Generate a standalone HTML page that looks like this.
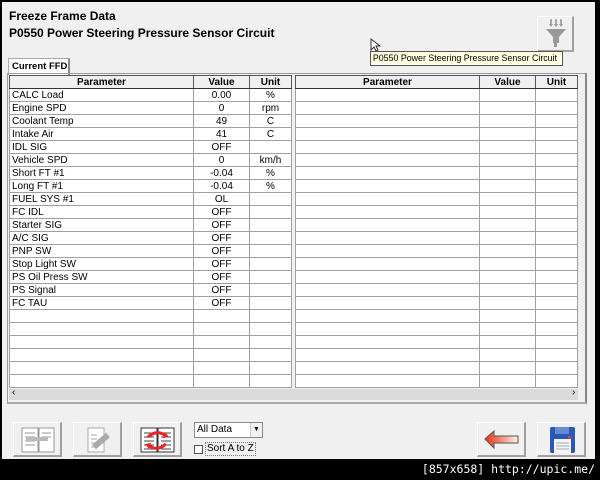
<!DOCTYPE html>
<html><head><style>
*{margin:0;padding:0;box-sizing:border-box}
body{width:600px;height:480px;background:#000;position:relative;overflow:hidden;font-family:"Liberation Sans",Arial,sans-serif;font-size:11px;color:#000}
.win{position:absolute;left:2px;top:2px;width:593px;height:457px;background:#f0f0f0}
.a{position:absolute;white-space:nowrap}
.t1{left:9px;top:9px;font-weight:bold;font-size:12px}
.t2{left:9px;top:26px;font-weight:bold;font-size:12px}
table{position:absolute;border-collapse:collapse;table-layout:fixed;background:#fff;border:1px solid #333}
td,th{height:13px;border:1px solid #a0a0a0;padding:0 2px;font-size:10px;line-height:11px;white-space:nowrap;overflow:hidden}
th{background:#f0f0f0;font-weight:bold;border:1px solid #555;border-bottom:1px solid #333}
td.c{text-align:center}
.btn{position:absolute;width:49px;height:35px;background:#f0f0f0;border:1px solid #fff;border-right:2px solid #a0a0a0;border-bottom:2px solid #a0a0a0}
</style></head><body>
<div class="win"></div>
<div class="a t1">Freeze Frame Data</div>
<div class="a t2">P0550 Power Steering Pressure Sensor Circuit</div>

<div class="btn" style="left:537px;top:16px;width:37px;height:36px">
<svg width="34" height="32" viewBox="0 0 34 32"><g fill="#999"><path d="M8 12h20l-7 8v6h-6v-6z"/><rect x="16" y="26" width="3" height="4"/><path d="M13 2v6M18 2v6M23 2v6" stroke="#aaa" stroke-width="2"/><path d="M11 7l2 3 2-3zM16 7l2 3 2-3zM21 7l2 3 2-3z"/></g></svg>
</div>
<svg class="a" style="left:370px;top:38px" width="12" height="14"><path d="M1 1v11l3-3 2 4 2-1-2-4h4z" fill="#fff" stroke="#333" stroke-width="1"/></svg>
<div class="a" style="left:370px;top:51px;width:193px;height:15px;background:#ffffe1;border:1px solid #555;overflow:hidden"><span style="display:inline-block;font-size:9.5px;line-height:13px;padding-left:2px;transform:scaleX(0.93);transform-origin:0 0">P0550 Power Steering Pressure Sensor Circuit</span></div>

<div class="a" style="left:8px;top:58px;width:62px;height:17px;background:#fff;border:1px solid #aaa;border-bottom:none;border-right:2px solid #888;font-weight:bold;font-size:9.5px;padding:2px 0 0 3px">Current FFD</div>
<div class="a" style="left:7px;top:73px;width:580px;height:331px;border:1px solid #999;border-right:2px solid #888;border-bottom:2px solid #aaa"></div>

<table style="left:9px;top:75px;width:282px">
<colgroup><col style="width:184px"><col style="width:56px"><col style="width:42px"></colgroup>
<tr><th>Parameter</th><th>Value</th><th>Unit</th></tr>
<tr><td>CALC Load</td><td class="c">0.00</td><td class="c">%</td></tr>
<tr><td>Engine SPD</td><td class="c">0</td><td class="c">rpm</td></tr>
<tr><td>Coolant Temp</td><td class="c">49</td><td class="c">C</td></tr>
<tr><td>Intake Air</td><td class="c">41</td><td class="c">C</td></tr>
<tr><td>IDL SIG</td><td class="c">OFF</td><td></td></tr>
<tr><td>Vehicle SPD</td><td class="c">0</td><td class="c">km/h</td></tr>
<tr><td>Short FT #1</td><td class="c">-0.04</td><td class="c">%</td></tr>
<tr><td>Long FT #1</td><td class="c">-0.04</td><td class="c">%</td></tr>
<tr><td>FUEL SYS #1</td><td class="c">OL</td><td></td></tr>
<tr><td>FC IDL</td><td class="c">OFF</td><td></td></tr>
<tr><td>Starter SIG</td><td class="c">OFF</td><td></td></tr>
<tr><td>A/C SIG</td><td class="c">OFF</td><td></td></tr>
<tr><td>PNP SW</td><td class="c">OFF</td><td></td></tr>
<tr><td>Stop Light SW</td><td class="c">OFF</td><td></td></tr>
<tr><td>PS Oil Press SW</td><td class="c">OFF</td><td></td></tr>
<tr><td>PS Signal</td><td class="c">OFF</td><td></td></tr>
<tr><td>FC TAU</td><td class="c">OFF</td><td></td></tr>
<tr><td></td><td></td><td></td></tr><tr><td></td><td></td><td></td></tr><tr><td></td><td></td><td></td></tr><tr><td></td><td></td><td></td></tr><tr><td></td><td></td><td></td></tr><tr><td></td><td></td><td></td></tr>
</table>

<table style="left:295px;top:75px;width:282px">
<colgroup><col style="width:184px"><col style="width:56px"><col style="width:42px"></colgroup>
<tr><th>Parameter</th><th>Value</th><th>Unit</th></tr>
<tr><td></td><td></td><td></td></tr><tr><td></td><td></td><td></td></tr><tr><td></td><td></td><td></td></tr><tr><td></td><td></td><td></td></tr><tr><td></td><td></td><td></td></tr><tr><td></td><td></td><td></td></tr><tr><td></td><td></td><td></td></tr><tr><td></td><td></td><td></td></tr><tr><td></td><td></td><td></td></tr><tr><td></td><td></td><td></td></tr><tr><td></td><td></td><td></td></tr><tr><td></td><td></td><td></td></tr><tr><td></td><td></td><td></td></tr><tr><td></td><td></td><td></td></tr><tr><td></td><td></td><td></td></tr><tr><td></td><td></td><td></td></tr><tr><td></td><td></td><td></td></tr><tr><td></td><td></td><td></td></tr><tr><td></td><td></td><td></td></tr><tr><td></td><td></td><td></td></tr><tr><td></td><td></td><td></td></tr><tr><td></td><td></td><td></td></tr><tr><td></td><td></td><td></td></tr>
</table>

<div class="a" style="left:9px;top:389px;width:569px;height:11px;background:#dadada"></div>
<div class="a" style="left:12px;top:387px;font-size:10px">&lsaquo;</div>
<div class="a" style="left:572px;top:387px;font-size:10px">&rsaquo;</div>

<div class="btn" style="left:13px;top:422px">
<svg width="46" height="32"><rect x="8" y="5" width="16" height="24" fill="#fff" stroke="#999"/><rect x="25" y="5" width="15" height="24" fill="#fff" stroke="#999"/><path d="M11 10h10M11 14h10M11 18h10M11 22h10M28 10h9M28 14h9" stroke="#999"/><path d="M12 16h22" stroke="#bbb" stroke-width="4"/></svg></div>
<div class="btn" style="left:73px;top:422px">
<svg width="46" height="32"><rect x="14" y="5" width="16" height="24" fill="#fff" stroke="#aaa"/><path d="M17 12h6M17 16h6M17 20h6M17 24h5" stroke="#aaa"/><path d="M20 24l14-12" stroke="#aaa" stroke-width="6"/></svg></div>
<div class="btn" style="left:133px;top:422px">
<svg width="46" height="32"><rect x="7" y="5" width="16" height="24" fill="#fff" stroke="#333"/><rect x="24" y="5" width="16" height="24" fill="#fff" stroke="#333"/><path d="M10 10h10M10 14h10M10 18h10M10 22h10M10 26h10M27 10h10M27 14h10M27 18h10M27 22h10M27 26h10" stroke="#444"/><path d="M14 14q9-8 18-1M32 21q-9 8-18 1" fill="none" stroke="#e22" stroke-width="3"/><path d="M31 9l4 5-6 1zM15 26l-4-5 6-1z" fill="#e22"/></svg></div>

<div class="a" style="left:194px;top:422px;width:69px;height:16px;background:#fff;border:1px solid #888;font-size:10px;line-height:14px;padding-left:2px">All Data</div>
<div class="a" style="left:250px;top:423px;width:12px;height:14px;background:#f0f0f0;border-left:1px solid #ccc;font-size:7px;text-align:center;line-height:14px">&#9660;</div>
<div class="a" style="left:194px;top:445px;width:9px;height:9px;background:#fff;border:1px solid #555"></div>
<div class="a" style="left:205px;top:442px;border:1px dotted #777;font-size:10px;line-height:12px;padding:0 1px">Sort A to Z</div>

<div class="btn" style="left:477px;top:422px">
<svg width="46" height="32"><defs><linearGradient id="g" x1="0" x2="1"><stop offset="0" stop-color="#e83010"/><stop offset="1" stop-color="#fff0e8"/></linearGradient></defs><path d="M7 16l9-8v5h24v7H16v5z" fill="url(#g)" stroke="#555"/></svg></div>
<div class="btn" style="left:537px;top:422px">
<svg width="46" height="32"><rect x="12" y="4" width="25" height="26" rx="2" fill="#2a58b8"/><rect x="17" y="4" width="14" height="7" fill="#6a8ad0"/><rect x="16" y="16" width="17" height="14" fill="#f4f4f4"/><path d="M18 20h13M18 23h13M18 26h13" stroke="#aab"/><rect x="30" y="13" width="3" height="3" fill="#e33"/></svg></div>

<div class="a" style="right:5px;top:462px;color:#fff;font-family:'DejaVu Sans Mono','Liberation Mono',monospace;font-size:11.5px">[857x658] http://upic.me/</div>
</body></html>
